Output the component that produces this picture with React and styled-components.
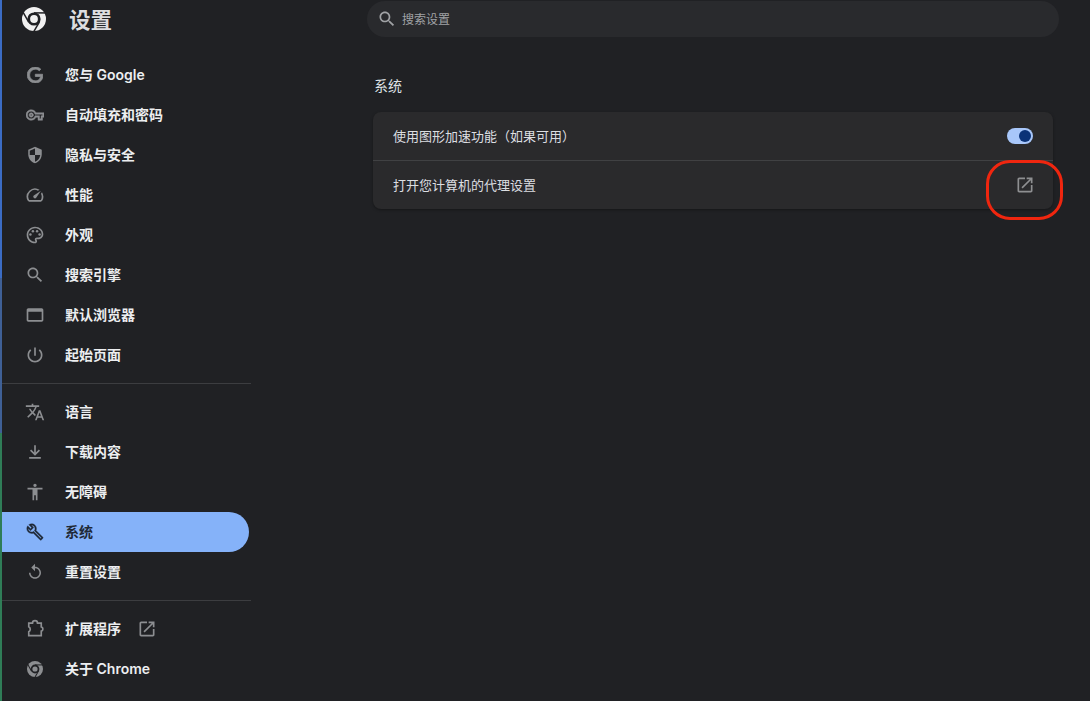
import React from "react";
import styled, { createGlobalStyle } from "styled-components";
import { SiGoogle } from "react-icons/si";

const Global = createGlobalStyle`
  html, body { margin: 0; padding: 0; background: #202124; }
  body { font-family: Inter, "Noto Sans CJK SC", sans-serif; }
`;

const Page = styled.div`
  position: relative;
  display: flex;
  width: 1090px;
  height: 701px;
  overflow: hidden;
  background: #202124;
  color: #e8eaed;
`;

const EdgeStrip = styled.div`
  flex: none;
  width: 2px;
  background: linear-gradient(#3b6cc4 0, #3b6cc4 278px, #3f6096 278px, #3f6096 433px, #2f7d57 433px, #2f7d57 100%);
`;

const Sidebar = styled.aside`
  flex: none;
  width: 249px;
  display: flex;
  flex-direction: column;
`;

const Header = styled.header`
  height: 55px;
  display: flex;
  align-items: flex-start;
  padding: 7px 0 0 20px;
  box-sizing: border-box;
  color: #f1f1f1;
`;

const HeaderTitle = styled.h1`
  margin: -1px 0 0 23px;
  font: 600 21.5px/26px "Noto Sans CJK SC", sans-serif;
  color: #dcdddf;
`;

const NavGroup = styled.nav`
  display: flex;
  flex-direction: column;
`;

const NavItem = styled.div`
  height: 40px;
  margin-right: ${(p) => (p.$active ? "2px" : "0")};
  display: flex;
  align-items: center;
  box-sizing: border-box;
  padding-left: 23px;
  border-radius: 0 20px 20px 0;
  background: ${(p) => (p.$active ? "#85b2f9" : "transparent")};
  color: ${(p) => (p.$active ? "#1f2937" : "#eceef0")};
  font: 600 14px/20px Inter, "Noto Sans CJK SC", sans-serif;
`;

const NavIcon = styled.span`
  width: 20px;
  height: 20px;
  flex: none;
  margin-right: 20px;
  display: flex;
  align-items: center;
  justify-content: center;
  color: ${(p) => (p.$active ? "#1f2937" : "#8c8e91")};
`;

const TrailingIcon = styled.span`
  display: flex;
  margin-left: 16px;
  color: #8c8e91;
`;

const Divider = styled.hr`
  margin: 8px 0;
  border: 0;
  height: 1px;
  background: #3c3d40;
`;

const Main = styled.main`
  flex: 1;
  padding: 1px 31px 0 116px;
  display: flex;
  flex-direction: column;
`;

const SearchBar = styled.div`
  height: 36px;
  border-radius: 18px;
  background: #292a2d;
  display: flex;
  align-items: center;
  gap: 5px;
  padding-left: 10px;
  color: #a0a2a5;
  font: 400 12px/16px "Noto Sans CJK SC", sans-serif;
`;

const SectionTitle = styled.h2`
  margin: 38px 0 17px 7px;
  font: 400 14px/20px "Noto Sans CJK SC", sans-serif;
  color: #dfe1e4;
`;

const Card = styled.section`
  margin-left: 6px;
  width: 680px;
  border-radius: 8px;
  background: #2a2a2c;
  box-shadow: 0 1px 3px rgba(0, 0, 0, 0.35);
`;

const Row = styled.div`
  height: 48px;
  display: flex;
  align-items: center;
  justify-content: space-between;
  padding: 0 20px;
  font: 400 13px/20px "Noto Sans CJK SC", sans-serif;
  color: #dcdee1;
  & + & {
    height: 49px;
    box-sizing: border-box;
    border-top: 1px solid #404143;
  }
`;

const Toggle = styled.span`
  width: 26px;
  height: 16px;
  box-sizing: border-box;
  padding: 2px;
  border-radius: 8px;
  background: #a8c7fa;
  display: flex;
  justify-content: flex-end;
`;

const Thumb = styled.span`
  width: 12px;
  height: 12px;
  border-radius: 50%;
  background: #0a3277;
`;

const RowIcon = styled.span`
  display: flex;
  margin-right: -2px;
  color: #8e8f91;
`;

const BoldGoogle = styled(SiGoogle)`
  stroke: currentColor;
  stroke-width: 1.2px;
`;

const Annotation = styled.div`
  position: absolute;
  left: 986px;
  top: 160px;
  width: 77px;
  height: 60px;
  box-sizing: border-box;
  border: 3px solid #f0260f;
  border-radius: 24px;
`;

const Icon = ({ d, size = 20, thick, children }) => (
  <svg width={size} height={size} viewBox="0 0 24 24" fill="currentColor" stroke={thick ? "currentColor" : "none"} strokeWidth={thick || 0}>
    {d && <path d={d} />}
    {children}
  </svg>
);

const ChromeLogo = ({ size, bg }) => (
  <svg width={size} height={size} viewBox="0 0 24 24">
    <circle cx="12" cy="12" r="12" fill="currentColor" />
    <circle cx="12" cy="12" r="6.6" fill={bg} />
    <circle cx="12" cy="12" r="3.9" fill="currentColor" />
    <g stroke={bg} strokeWidth="1.5">
      <path d="M12 5.9H24" />
      <path d="M12 5.9H24" transform="rotate(120 12 12)" />
      <path d="M12 5.9H24" transform="rotate(240 12 12)" />
    </g>
  </svg>
);

const Extension = () => (
  <svg width="20" height="20" viewBox="0 0 24 24" fill="none" stroke="currentColor" strokeWidth="2">
    <path d="M4.5 5H9a3 3 0 0 1 6 0H19.5V9.4a2.7 2.7 0 0 1 0 5.2V20H4.5V15.4a3.4 3.4 0 0 0 0-6Z" />
  </svg>
);

const P = {
  key: "M22 19h-6v-4h-2.68c-1.14 2.42-3.6 4-6.32 4-3.86 0-7-3.14-7-7s3.14-7 7-7c2.72 0 5.17 1.58 6.32 4H24v6h-2v4zm-4-2h2v-4h2v-2H11.94l-.23-.67C11.01 8.34 9.11 7 7 7c-2.76 0-5 2.24-5 5s2.24 5 5 5c2.11 0 4.01-1.34 4.71-3.33l.23-.67H18v4zM7 15c-1.65 0-3-1.35-3-3s1.35-3 3-3 3 1.35 3 3-1.35 3-3 3zm0-4c-.55 0-1 .45-1 1s.45 1 1 1 1-.45 1-1-.45-1-1-1z",
  shield: "M12 1L3 5v6c0 5.55 3.84 10.74 9 12 5.16-1.26 9-6.45 9-12V5l-9-4zm0 10.99h7c-.53 4.12-3.28 7.79-7 8.94V12H5V6.3l7-3.11v8.8z",
  speed: "M20.38 8.57l-1.23 1.85a8 8 0 0 1-.22 7.58H5.07A8 8 0 0 1 15.58 6.85l1.85-1.23A10 10 0 0 0 3.35 19a2 2 0 0 0 1.72 1h13.85a2 2 0 0 0 1.74-1 10 10 0 0 0-.27-10.44zm-9.79 6.84a2 2 0 0 0 2.83 0l5.66-8.49-8.49 5.66a2 2 0 0 0 0 2.83z",
  palette: "M12 22C6.49 22 2 17.51 2 12S6.49 2 12 2s10 4.04 10 9c0 3.31-2.69 6-6 6h-1.77c-.28 0-.5.22-.5.5 0 .12.05.23.13.33.41.47.64 1.06.64 1.67 0 1.38-1.12 2.5-2.5 2.5zm0-18c-4.41 0-8 3.59-8 8s3.59 8 8 8c.28 0 .5-.22.5-.5a.54.54 0 0 0-.14-.35c-.41-.46-.63-1.05-.63-1.65 0-1.38 1.12-2.5 2.5-2.5H16c2.21 0 4-1.79 4-4 0-3.86-3.59-7-8-7z",
  search: "M15.5 14h-.79l-.28-.27C15.41 12.59 16 11.11 16 9.5 16 5.91 13.09 3 9.5 3S3 5.91 3 9.5 5.91 16 9.5 16c1.61 0 3.09-.59 4.23-1.57l.27.28v.79l5 4.99L20.49 19l-4.99-5zm-6 0C7.01 14 5 11.99 5 9.5S7.01 5 9.5 5 14 7.01 14 9.5 11.99 14 9.5 14z",
  browser: "M20 4H4c-1.1 0-2 .9-2 2v12c0 1.1.9 2 2 2h16c1.1 0 2-.9 2-2V6c0-1.1-.9-2-2-2zm0 14H4V8h16v10z",
  power: "M13 3h-2v10h2V3zm4.83 2.17l-1.42 1.42C17.99 7.86 19 9.81 19 12c0 3.87-3.13 7-7 7s-7-3.13-7-7c0-2.19 1.01-4.14 2.58-5.42L6.17 5.17C4.23 6.82 3 9.26 3 12c0 4.97 4.03 9 9 9s9-4.03 9-9c0-2.74-1.23-5.18-3.17-6.83z",
  translate: "M12.87 15.07l-2.54-2.51.03-.03c1.74-1.94 2.98-4.17 3.71-6.53H17V4h-7V2H8v2H1v1.99h11.17C11.5 7.92 10.44 9.75 9 11.35 8.07 10.32 7.3 9.19 6.69 8h-2c.73 1.63 1.73 3.17 2.98 4.56l-5.09 5.02L4 19l5-5 3.11 3.11.76-2.04zM18.5 10h-2L12 22h2l1.12-3h4.75L21 22h2l-4.5-12zm-2.62 7l1.62-4.33L19.12 17h-3.24z",
  download: "M5 20h14v-2H5v2zM18 10.4 16.6 9 13 12.6V4h-2v8.6L7.4 9 6 10.4l6 6z",
  person: "M12 2c1.1 0 2 .9 2 2s-.9 2-2 2-2-.9-2-2 .9-2 2-2zm9 7h-6v13h-2v-6h-2v6H9V9H3V7h18v2z",
  wrench: "M22.61 18.99l-9.08-9.08c.93-2.34.45-5.1-1.44-7C9.79.61 6.21.4 3.66 2.26L7.5 6.11 6.08 7.52 2.25 3.69C.39 6.23.6 9.82 2.9 12.11c1.86 1.86 4.57 2.35 6.89 1.48l9.11 9.11c.39.39 1.02.39 1.41 0l2.3-2.3c.4-.38.4-1.01 0-1.41zm-3 1.6l-9.46-9.46c-.61.45-1.29.72-2 .82-1.36.2-2.79-.21-3.83-1.25C3.37 9.76 2.93 8.5 3 7.26l3.09 3.09 4.24-4.24-3.09-3.09c1.24-.07 2.49.37 3.44 1.31 1.08 1.08 1.49 2.57 1.24 3.96-.12.71-.42 1.37-.88 1.96l9.45 9.45-.88.88z",
  reset: "M12 5V1L7 6l5 5V7c3.31 0 6 2.69 6 6s-2.69 6-6 6-6-2.69-6-6H4c0 4.42 3.58 8 8 8s8-3.58 8-8-3.58-8-8-8z",
  open: "M19 19H5V5h7V3H5c-1.11 0-2 .9-2 2v14c0 1.1.89 2 2 2h14c1.1 0 2-.9 2-2v-7h-2v7zM14 3v2h3.59l-9.83 9.83 1.41 1.41L19 6.41V10h2V3h-7z",
};

const Palette = () => (
  <Icon d={P.palette}>
    <circle cx="6.5" cy="11.5" r="1.5" />
    <circle cx="9.5" cy="7.5" r="1.5" />
    <circle cx="14.5" cy="7.5" r="1.5" />
    <circle cx="17.5" cy="11.5" r="1.5" />
  </Icon>
);

const Item = ({ icon, label, active, trailing }) => (
  <NavItem $active={active}>
    <NavIcon $active={active}>{icon}</NavIcon>
    {label}
    {trailing && <TrailingIcon>{trailing}</TrailingIcon>}
  </NavItem>
);

export default function App() {
  return (
    <Page>
      <Global />
      <EdgeStrip />
      <Sidebar>
        <Header>
          <ChromeLogo size={24} bg="#202124" />
          <HeaderTitle>设置</HeaderTitle>
        </Header>
        <NavGroup>
          <Item icon={<BoldGoogle size={16} />} label="您与 Google" />
          <Item icon={<Icon d={P.key} size={18} thick={0.6} />} label="自动填充和密码" />
          <Item icon={<Icon d={P.shield} size={18} />} label="隐私与安全" />
          <Item icon={<Icon d={P.speed} />} label="性能" />
          <Item icon={<Palette />} label="外观" />
          <Item icon={<Icon d={P.search} />} label="搜索引擎" />
          <Item icon={<Icon d={P.browser} />} label="默认浏览器" />
          <Item icon={<Icon d={P.power} />} label="起始页面" />
        </NavGroup>
        <Divider />
        <NavGroup>
          <Item icon={<Icon d={P.translate} />} label="语言" />
          <Item icon={<Icon d={P.download} />} label="下载内容" />
          <Item icon={<Icon d={P.person} />} label="无障碍" />
          <Item active icon={<Icon d={P.wrench} size={18} thick={0.4} />} label="系统" />
          <Item icon={<Icon d={P.reset} size={18} />} label="重置设置" />
        </NavGroup>
        <Divider />
        <NavGroup>
          <Item icon={<Extension />} label="扩展程序" trailing={<Icon d={P.open} />} />
          <Item icon={<ChromeLogo size={16} bg="#202124" />} label="关于 Chrome" />
        </NavGroup>
      </Sidebar>
      <Main>
        <SearchBar>
          <Icon d={P.search} />
          搜索设置
        </SearchBar>
        <SectionTitle>系统</SectionTitle>
        <Card>
          <Row>
            使用图形加速功能（如果可用）
            <Toggle>
              <Thumb />
            </Toggle>
          </Row>
          <Row>
            打开您计算机的代理设置
            <RowIcon>
              <Icon d={P.open} />
            </RowIcon>
          </Row>
        </Card>
      </Main>
      <Annotation />
    </Page>
  );
}
